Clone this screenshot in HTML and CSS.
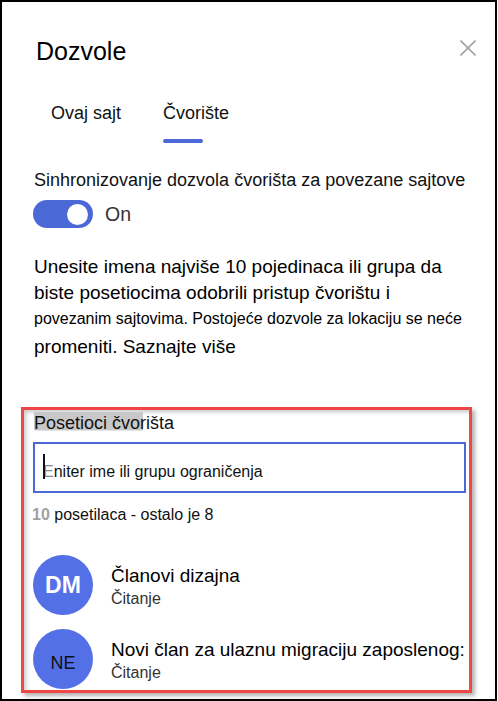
FILE: index.html
```html
<!DOCTYPE html>
<html lang="sr">
<head>
<meta charset="utf-8">
<title>Dozvole</title>
<link rel="stylesheet" href="styles.css">
</head>
<body>
<div class="frame">
  <div class="header">
    <h1 class="title">Dozvole</h1>
    <svg class="close" width="16" height="16" viewBox="0 0 16 16" aria-label="Zatvori">
      <path d="M0.5 0.5 L15.5 15.5 M15.5 0.5 L0.5 15.5" stroke="#a3a3a3" stroke-width="1.6" fill="none"/>
    </svg>
  </div>

  <div class="tabs">
    <div class="tab">Ovaj sajt</div>
    <div class="tab active">Čvorište</div>
  </div>

  <div class="sync-label">Sinhronizovanje dozvola čvorišta za povezane sajtove</div>
  <div class="toggle-row">
    <span class="toggle"><span class="knob"></span></span>
    <span class="toggle-text">On</span>
  </div>

  <div class="desc">
    <span class="line big">Unesite imena najviše 10 pojedinaca ili grupa da</span>
    <span class="line big">biste posetiocima odobrili pristup čvorištu i</span>
    <span class="line small">povezanim sajtovima. Postojeće dozvole za lokaciju se neće</span>
    <span class="line big last">promeniti. Saznajte više</span>
  </div>

  <div class="highlight-box">
    <div class="visitors-label">Posetioci čvorišta</div>
    <div class="input">
      <span class="caret"></span>
      <span class="ph-first">E</span>niter ime ili grupu ograničenja
    </div>
    <div class="count"><span class="count-num">10</span> posetilaca - ostalo je 8</div>

    <div class="person">
      <div class="avatar dm">DM</div>
      <div class="person-info">
        <div class="person-name">Članovi dizajna</div>
        <div class="person-role">Čitanje</div>
      </div>
    </div>
    <div class="person second">
      <div class="avatar ne">NE</div>
      <div class="person-info">
        <div class="person-name">Novi član za ulaznu migraciju zaposlenog:</div>
        <div class="person-role">Čitanje</div>
      </div>
    </div>
  </div>
</div>
</body>
</html>
```

FILE: styles.css
```css
* { box-sizing: border-box; }

html, body {
  margin: 0;
  padding: 0;
  background: #ffffff;
}

body {
  font-family: "Liberation Sans", Arial, sans-serif;
  color: #000;
}

.frame {
  width: 497px;
  height: 701px;
  border: 2px solid #000;
  background: #fff;
  padding-left: 32px;
  overflow: hidden;
}

.header {
  display: flex;
  justify-content: space-between;
  align-items: flex-start;
  padding-right: 19px;
  margin-top: 34px;
}

.title {
  margin: 0 0 0 2px;
  font-size: 25px;
  font-weight: normal;
  line-height: 30px;
  color: #000;
}

.close {
  display: block;
  margin-top: 4px;
}

.tabs {
  display: flex;
  margin-top: 35px;
  padding-left: 17px;
}

.tab {
  font-size: 18px;
  line-height: 24px;
  color: #111;
}

.tab::after {
  content: "";
  display: block;
  width: 40px;
  height: 4px;
  margin-top: 14px;
  border-radius: 2px;
  background: transparent;
}

.tab + .tab {
  margin-left: 42px;
}

.tab.active::after {
  background: #4a68d6;
}

.sync-label {
  margin-top: 25px;
  font-size: 18px;
  line-height: 24px;
  color: #111;
}

.toggle-row {
  display: flex;
  align-items: center;
  margin-top: 8px;
  margin-left: -1px;
}

.toggle {
  display: flex;
  align-items: center;
  justify-content: flex-end;
  width: 60px;
  height: 28px;
  border-radius: 14px;
  background: #4a68d6;
  padding-right: 5px;
}

.knob {
  width: 21px;
  height: 21px;
  border-radius: 50%;
  background: #fff;
}

.toggle-text {
  margin-left: 12px;
  font-size: 19.5px;
  color: #333;
}

.desc {
  margin-top: 25.5px;
}

.line {
  display: block;
  white-space: nowrap;
  color: #000;
}

.line.big {
  font-size: 19px;
  line-height: 26px;
}

.line.small {
  font-size: 16px;
  line-height: 26px;
}

.line.big.last {
  line-height: 30px;
}

.highlight-box {
  margin-top: 45.5px;
  margin-left: -13px;
  width: 451px;
  border: 3px solid #ef4646;
  padding: 1.5px 0 1px 10px;
  box-shadow: 3px 3px 4px rgba(0, 0, 0, 0.3), inset 3px 3px 4px -1px rgba(0, 0, 0, 0.22);
}

.visitors-label {
  font-size: 18px;
  line-height: 22px;
  color: #111;
  background-image: linear-gradient(#c8c8c8, #c8c8c8);
  background-repeat: no-repeat;
  background-size: 109px 18.5px;
  background-position: 0 0;
}

.input {
  position: relative;
  margin-top: 8.5px;
  margin-left: -1px;
  width: 433px;
  height: 51px;
  border: 2px solid #4a68d6;
  padding: 8px 0 0 8px;
  font-size: 16px;
  line-height: 39px;
  color: #111;
  white-space: nowrap;
}

.ph-first {
  color: #8a8a8a;
}

.caret {
  position: absolute;
  left: 8px;
  top: 10px;
  width: 2px;
  height: 25px;
  background: #111;
}

.count {
  margin-top: 10.5px;
  margin-left: -2px;
  font-size: 16px;
  line-height: 22px;
  color: #111;
}

.count-num {
  color: #a0a0a0;
  font-weight: bold;
}

.person {
  display: flex;
  align-items: flex-start;
  margin-top: 29.5px;
  margin-left: -1px;
}

.person.second {
  margin-top: 14px;
}

.avatar {
  flex: none;
  width: 60px;
  height: 60px;
  border-radius: 50%;
  background: #5370e6;
  display: flex;
  align-items: center;
  justify-content: center;
}

.avatar.dm {
  color: #fff;
  font-weight: bold;
  font-size: 23px;
}

.avatar.ne {
  color: #111;
  font-size: 18px;
  padding-top: 9px;
}

.person-info {
  margin-left: 18px;
  padding-top: 9.4px;
  white-space: nowrap;
}

.person-name {
  font-size: 19px;
  line-height: 24px;
  color: #000;
}

.person-role {
  font-size: 16px;
  line-height: 22px;
  color: #333;
}
```
